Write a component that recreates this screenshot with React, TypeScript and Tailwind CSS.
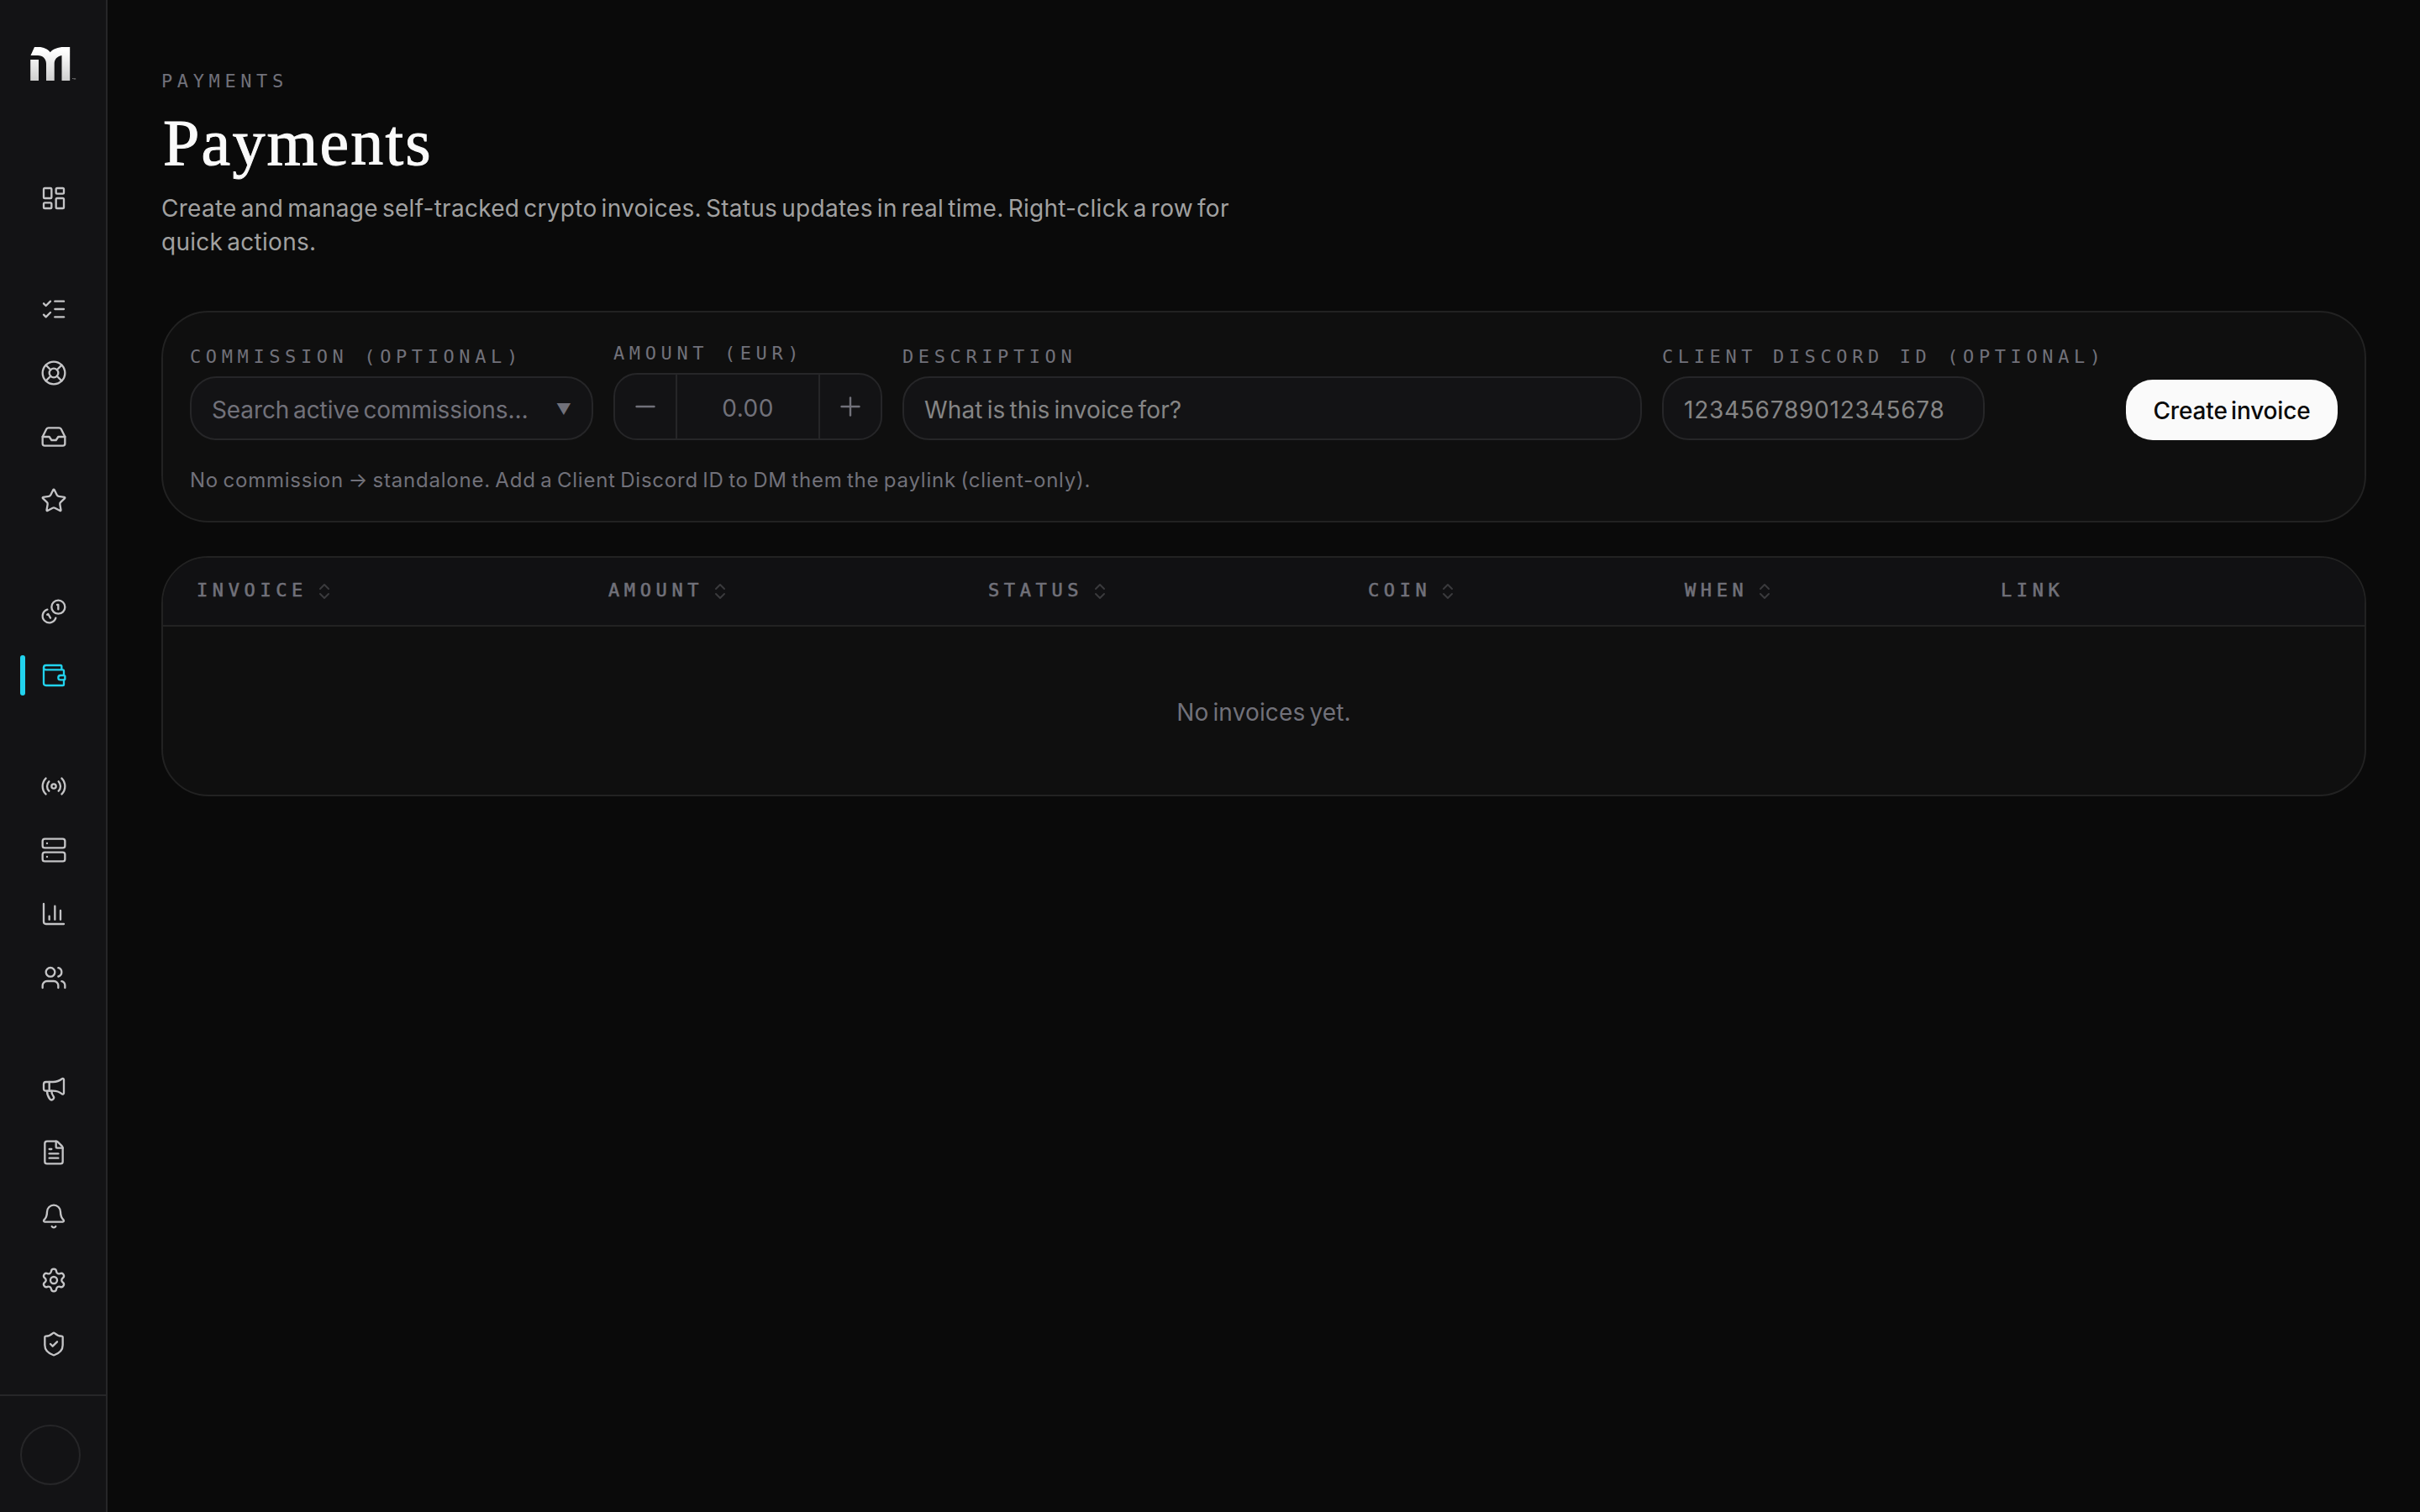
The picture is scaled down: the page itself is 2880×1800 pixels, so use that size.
import {
  Bell,
  ChartColumn,
  ChevronsUpDown,
  FileText,
  Inbox,
  LayoutDashboard,
  LifeBuoy,
  ListChecks,
  Megaphone,
  Minus,
  Plus,
  Radio,
  Server,
  Settings,
  ShieldCheck,
  Star,
  Users,
  Wallet,
} from 'lucide-react';
import type { ComponentType } from 'react';
import clsx from 'clsx';

type IconProps = { size?: number; strokeWidth?: number };

const CoinPair = ({ size = 24, strokeWidth = 2 }: IconProps) => (
  <svg
    width={size}
    height={size}
    viewBox="0 0 24 24"
    fill="none"
    stroke="currentColor"
    strokeWidth={strokeWidth}
    strokeLinecap="round"
    strokeLinejoin="round"
  >
    <path d="M13.744 17.736a6 6 0 1 1-7.48-7.48" />
    <path d="M15 6h1v4" />
    <path d="m6.134 14.768.866-.5 2 3.464" />
    <circle cx="16" cy="8" r="6" />
  </svg>
);

const navGroups: ComponentType<IconProps>[][] = [
  [LayoutDashboard],
  [ListChecks, LifeBuoy, Inbox, Star],
  [CoinPair, Wallet],
  [Radio, Server, ChartColumn, Users],
  [Megaphone, FileText, Bell, Settings, ShieldCheck],
];

const columns = [
  { label: 'Invoice', sortable: true },
  { label: 'Amount', sortable: true },
  { label: 'Status', sortable: true },
  { label: 'Coin', sortable: true },
  { label: 'When', sortable: true },
  { label: 'Link', sortable: false },
];

const mono = "font-['DejaVu_Sans_Mono',monospace] text-[22px] leading-[34px] tracking-[5.6px] uppercase";
const field = 'h-[76px] rounded-[32px] border-2 border-[#262628] bg-[#131315] px-6 pt-[3px] text-[28px]';

const Logo = () => (
  <svg width="56" height="44" viewBox="36 54 56 44" fill="none">
    <defs>
      <linearGradient id="logo-fill" x1="0" y1="56" x2="0" y2="96" gradientUnits="userSpaceOnUse">
        <stop offset="0.1" stopColor="#ffffff" />
        <stop offset="1" stopColor="#cfcfcf" />
      </linearGradient>
    </defs>
    <path
      fill="url(#logo-fill)"
      d="M41 56H46C52 56 56.5 58.3 59.8 62.2C63.2 58.3 69 56 76 56H83.2V96H73.5V66C68 67 64.7 70.5 64.7 76V96H55V76C55 70 51 66 45 66H36.5ZM36.2 71H46V96H36.2Z"
    />
    <path d="M86 93.5H87.6M88.2 94.5V93.5L89 94.2L89.8 93.5V94.5" stroke="#8a8a8a" strokeWidth="0.8" />
  </svg>
);

const Sidebar = () => (
  <aside className="flex h-full w-32 shrink-0 flex-col border-r-2 border-[#262628] bg-[#131315]">
    <div className="pt-[54px] pl-9">
      <Logo />
    </div>
    <nav className="mt-[102px] flex flex-1 flex-col gap-[60px] px-6">
      {navGroups.map((group, i) => (
        <div key={i} className="flex flex-col gap-1">
          {group.map((Icon, j) => {
            const active = Icon === Wallet;
            return (
              <a
                key={j}
                className={clsx(
                  'relative flex h-[72px] items-center pl-6',
                  active ? 'text-[#22d3ee]' : 'text-[#c4c4c6]',
                )}
              >
                {active && <span className="absolute top-3 left-0 h-12 w-1.5 rounded-full bg-[#22d3ee]" />}
                <Icon size={32} strokeWidth={1.75} />
              </a>
            );
          })}
        </div>
      ))}
    </nav>
    <div className="border-t-2 border-[#262628] px-6 pt-[34px] pb-8">
      <div className="size-[72px] rounded-full border-2 border-[#262628]" />
    </div>
  </aside>
);

const InvoiceForm = () => (
  <section className="mt-[62px] h-[252px] rounded-[56px] border-2 border-[#222222] bg-[#0f0f0f] px-8 text-[#71717a]">
    <div className="flex h-[152px] items-end gap-6">
      <label className="flex w-[480px] flex-col gap-1.5">
        <span className={mono}>Commission (optional)</span>
        <div className={clsx(field, 'flex items-center justify-between')}>
          <span className="tracking-[-0.1px] [word-spacing:-3px]">Search active commissions…</span>
          <span className="text-[18px]">▼</span>
        </div>
      </label>
      <label className="flex w-80 flex-col gap-1.5">
        <span className={mono}>Amount (EUR)</span>
        <div className="flex h-20 overflow-hidden rounded-[28px] border-2 border-[#262628] bg-[#131315]">
          <button className="flex w-[72px] items-center justify-center">
            <Minus size={36} strokeWidth={1.6} />
          </button>
          <input
            placeholder="0.00"
            className="w-0 flex-1 border-x-2 border-[#262628] pt-[3px] text-center text-[28px] tracking-[0.5px] placeholder:text-[#71717a]"
          />
          <button className="flex w-[72px] items-center justify-center">
            <Plus size={36} strokeWidth={1.6} />
          </button>
        </div>
      </label>
      <label className="flex w-[880px] flex-col gap-1.5">
        <span className={mono}>Description</span>
        <input
          placeholder="What is this invoice for?"
          className={clsx(field, 'tracking-[0.15px] [word-spacing:-3px] placeholder:text-[#858585]')}
        />
      </label>
      <label className="flex w-[528px] flex-col gap-1.5">
        <span className={clsx(mono, 'whitespace-nowrap')}>Client Discord ID (optional)</span>
        <input
          placeholder="123456789012345678"
          className={clsx(field, 'w-96 tracking-[0.75px] placeholder:text-[#858585]')}
        />
      </label>
      <button className="h-[72px] w-[252px] rounded-[32px] bg-[#fafafa] pt-0.5 text-[28px] font-medium tracking-[-0.15px] whitespace-nowrap text-[#0a0a0a] [word-spacing:-3px]">
        Create invoice
      </button>
    </div>
    <p className="mt-8 text-[24px] leading-8 tracking-[0.77px] [word-spacing:-2px]">
      No commission → standalone. Add a Client Discord ID to DM them the paylink (client-only).
    </p>
  </section>
);

const InvoiceTable = () => (
  <section className="mt-10 h-[286px] overflow-hidden rounded-[56px] border-2 border-[#222222] bg-[#0f0f0f] text-[#71717a]">
    <div className="grid h-[82px] grid-cols-[490px_452px_452px_377px_376px_1fr] border-b-2 border-[#222222] bg-[#111113]">
      {columns.map(({ label, sortable }) => (
        <div key={label} className="flex items-center gap-2 pl-10">
          <span className={clsx(mono, 'pb-0.5 [-webkit-text-stroke:0.6px_#71717a]')}>{label}</span>
          {sortable && <ChevronsUpDown size={24} className="text-[#3a3a3d]" />}
        </div>
      ))}
    </div>
    <p className="flex h-[200px] items-center justify-center pt-[3px] text-[28px] tracking-[0.15px] [word-spacing:-3px]">
      No invoices yet.
    </p>
  </section>
);

const App = () => {
  return (
    <div className="flex h-[1800px] w-[2880px] overflow-hidden bg-[#0a0a0a] font-['Inter','Liberation_Sans',sans-serif]">
      <Sidebar />
      <main className="flex-1 px-16 pt-20">
        <header>
          <p className={clsx(mono, 'text-[#71717a]')}>Payments</p>
          <h1 className="mt-3.5 pl-0.5 font-['Liberation_Serif',serif] text-[78px] leading-[84px] tracking-[2.2px] text-[#fafafa] [-webkit-text-stroke:1px_#fafafa]">
            Payments
          </h1>
          <p className="mt-4 w-[1320px] text-[28px] leading-10 tracking-[0.27px] text-[#a1a1a1] [word-spacing:-3px]">
            Create and manage self-tracked crypto invoices. Status updates in real time. Right-click a row for quick
            actions.
          </p>
        </header>
        <InvoiceForm />
        <InvoiceTable />
      </main>
    </div>
  );
};

export default App;
